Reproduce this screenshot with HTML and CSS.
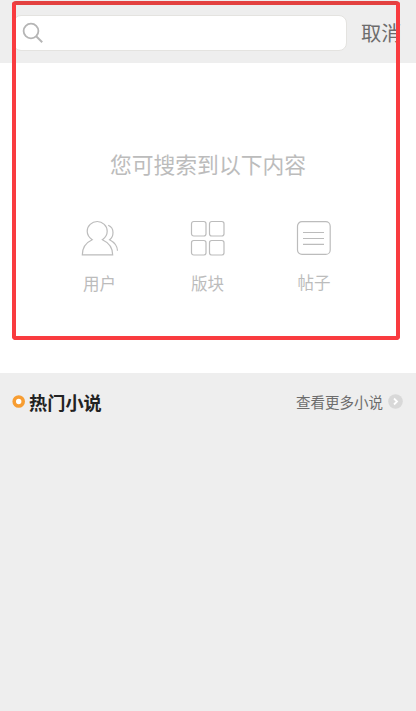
FILE: index.html
```html
<!DOCTYPE html>
<html lang="zh-CN">
<head>
<meta charset="utf-8">
<title>搜索</title>
<link rel="stylesheet" href="styles.css">
</head>
<body>
<header class="topbar">
  <div class="search">
    <svg width="22" height="22" viewBox="0 0 22 22" fill="none" stroke="#b5b5b5" stroke-width="1.8"><circle cx="9" cy="9" r="7.4"/><path d="M14.2 14.2L20.2 20.2" stroke-width="2"/></svg>
  </div>
  <span class="cancel">取消</span>
</header>
<main class="panel">
  <h1 class="hint">您可搜索到以下内容</h1>
  <div class="types">
    <div class="type">
      <svg width="38" height="36" viewBox="0 0 38 36"><path d="M11.2 19.7C8.2 17.6 6.2 14.8 6.2 11.3C6.2 5.8 10.8 1.5 16.2 1.5S26.2 5.8 26.2 11.3C26.2 14.8 24.4 17.6 21.4 19.7C27.5 22.5 31.7 27.5 31.7 34.9H1.3C1.3 27.5 5.1 22.5 11.2 19.7Z"/><path d="M27.2 5.3C30 6.5 32 9.1 32 12.5C32 15.8 30.7 18.2 28.6 19.8C33 22.1 36.3 25.8 36.5 30.8"/></svg>
      <span>用户</span>
    </div>
    <div class="type">
      <svg width="36" height="36" viewBox="0 0 36 36"><rect x="1.5" y="1.5" width="14.5" height="14.5" rx="2.2"/><rect x="19.5" y="1.5" width="14.5" height="14.5" rx="2.2"/><rect x="1.5" y="20.5" width="14.5" height="14.5" rx="2.2"/><rect x="19.5" y="20.5" width="14.5" height="14.5" rx="2.2"/></svg>
      <span>版块</span>
    </div>
    <div class="type post">
      <svg width="36" height="36" viewBox="0 0 36 36"><rect x="1.5" y="1.7" width="32.7" height="32.7" rx="4.5"/><path d="M7 12.5H28M7 18.5H28M7 24.3H28"/></svg>
      <span>帖子</span>
    </div>
  </div>
</main>
<section class="hot">
  <svg width="13" height="13" viewBox="0 0 13 13"><circle cx="6.7" cy="6.5" r="4.5" fill="#fff" stroke="#f79d32" stroke-width="3.6"/></svg>
  <h2>热门小说</h2>
  <span class="more">查看更多小说</span>
  <svg width="15" height="15" viewBox="0 0 15 15"><circle cx="7.5" cy="7.5" r="7.3" fill="#d8d8d8"/><path d="M6 4.5L9 7.5L6 10.5" fill="none" stroke="#fff" stroke-width="1.8"/></svg>
</section>
<div class="frame"></div>
</body>
</html>
```
FILE: styles.css
```css
* { box-sizing: border-box; }
body {
  margin: 0;
  height: 711px;
  overflow: hidden;
  background: #eee;
  font-family: "Noto Sans CJK SC", sans-serif;
}
.topbar {
  display: flex;
  align-items: center;
  height: 63px;
  padding: 2px 0 0 13px;
}
.search {
  display: flex;
  align-items: center;
  width: 334px;
  height: 36px;
  padding-left: 8px;
  background: #fff;
  border: 1px solid #e4e3e0;
  border-radius: 8px;
}
.cancel {
  margin: 0 0 1px 14px;
  color: #6c6c6c;
  font-size: 20.3px;
  line-height: 30px;
  white-space: nowrap;
}
.panel {
  height: 310px;
  padding-top: 84px;
  background: #fff;
}
.hint {
  margin: 0;
  color: #bcbcbc;
  font-size: 21.8px;
  font-weight: 400;
  line-height: 34px;
  text-align: center;
}
.types {
  display: flex;
  justify-content: space-between;
  margin: 39px 84px 0 81px;
}
.type {
  display: flex;
  flex-direction: column;
  align-items: center;
  color: #bcbcbc;
  font-size: 16.5px;
  line-height: 24px;
}
.type svg {
  fill: none;
  stroke: #bcbcbc;
  stroke-width: 1.2;
}
.type span { margin-top: 15px; }
.type:first-child span { margin-right: 1px; }
.post span { margin-top: 14px; }
.hot {
  display: flex;
  align-items: center;
  height: 57px;
  padding: 0 13px 0 12px;
}
.hot h2 {
  margin: 0 0 0 4px;
  color: #222;
  font-size: 18.2px;
  line-height: 28px;
}
.more {
  margin: 0 5px 0 auto;
  color: #6c6c6c;
  font-size: 14.5px;
}
.frame {
  position: absolute;
  left: 12px;
  top: 1px;
  width: 388px;
  height: 339px;
  border: 4px solid #f93b3f;
  border-top-color: #e34140;
  border-radius: 4px;
}
```
